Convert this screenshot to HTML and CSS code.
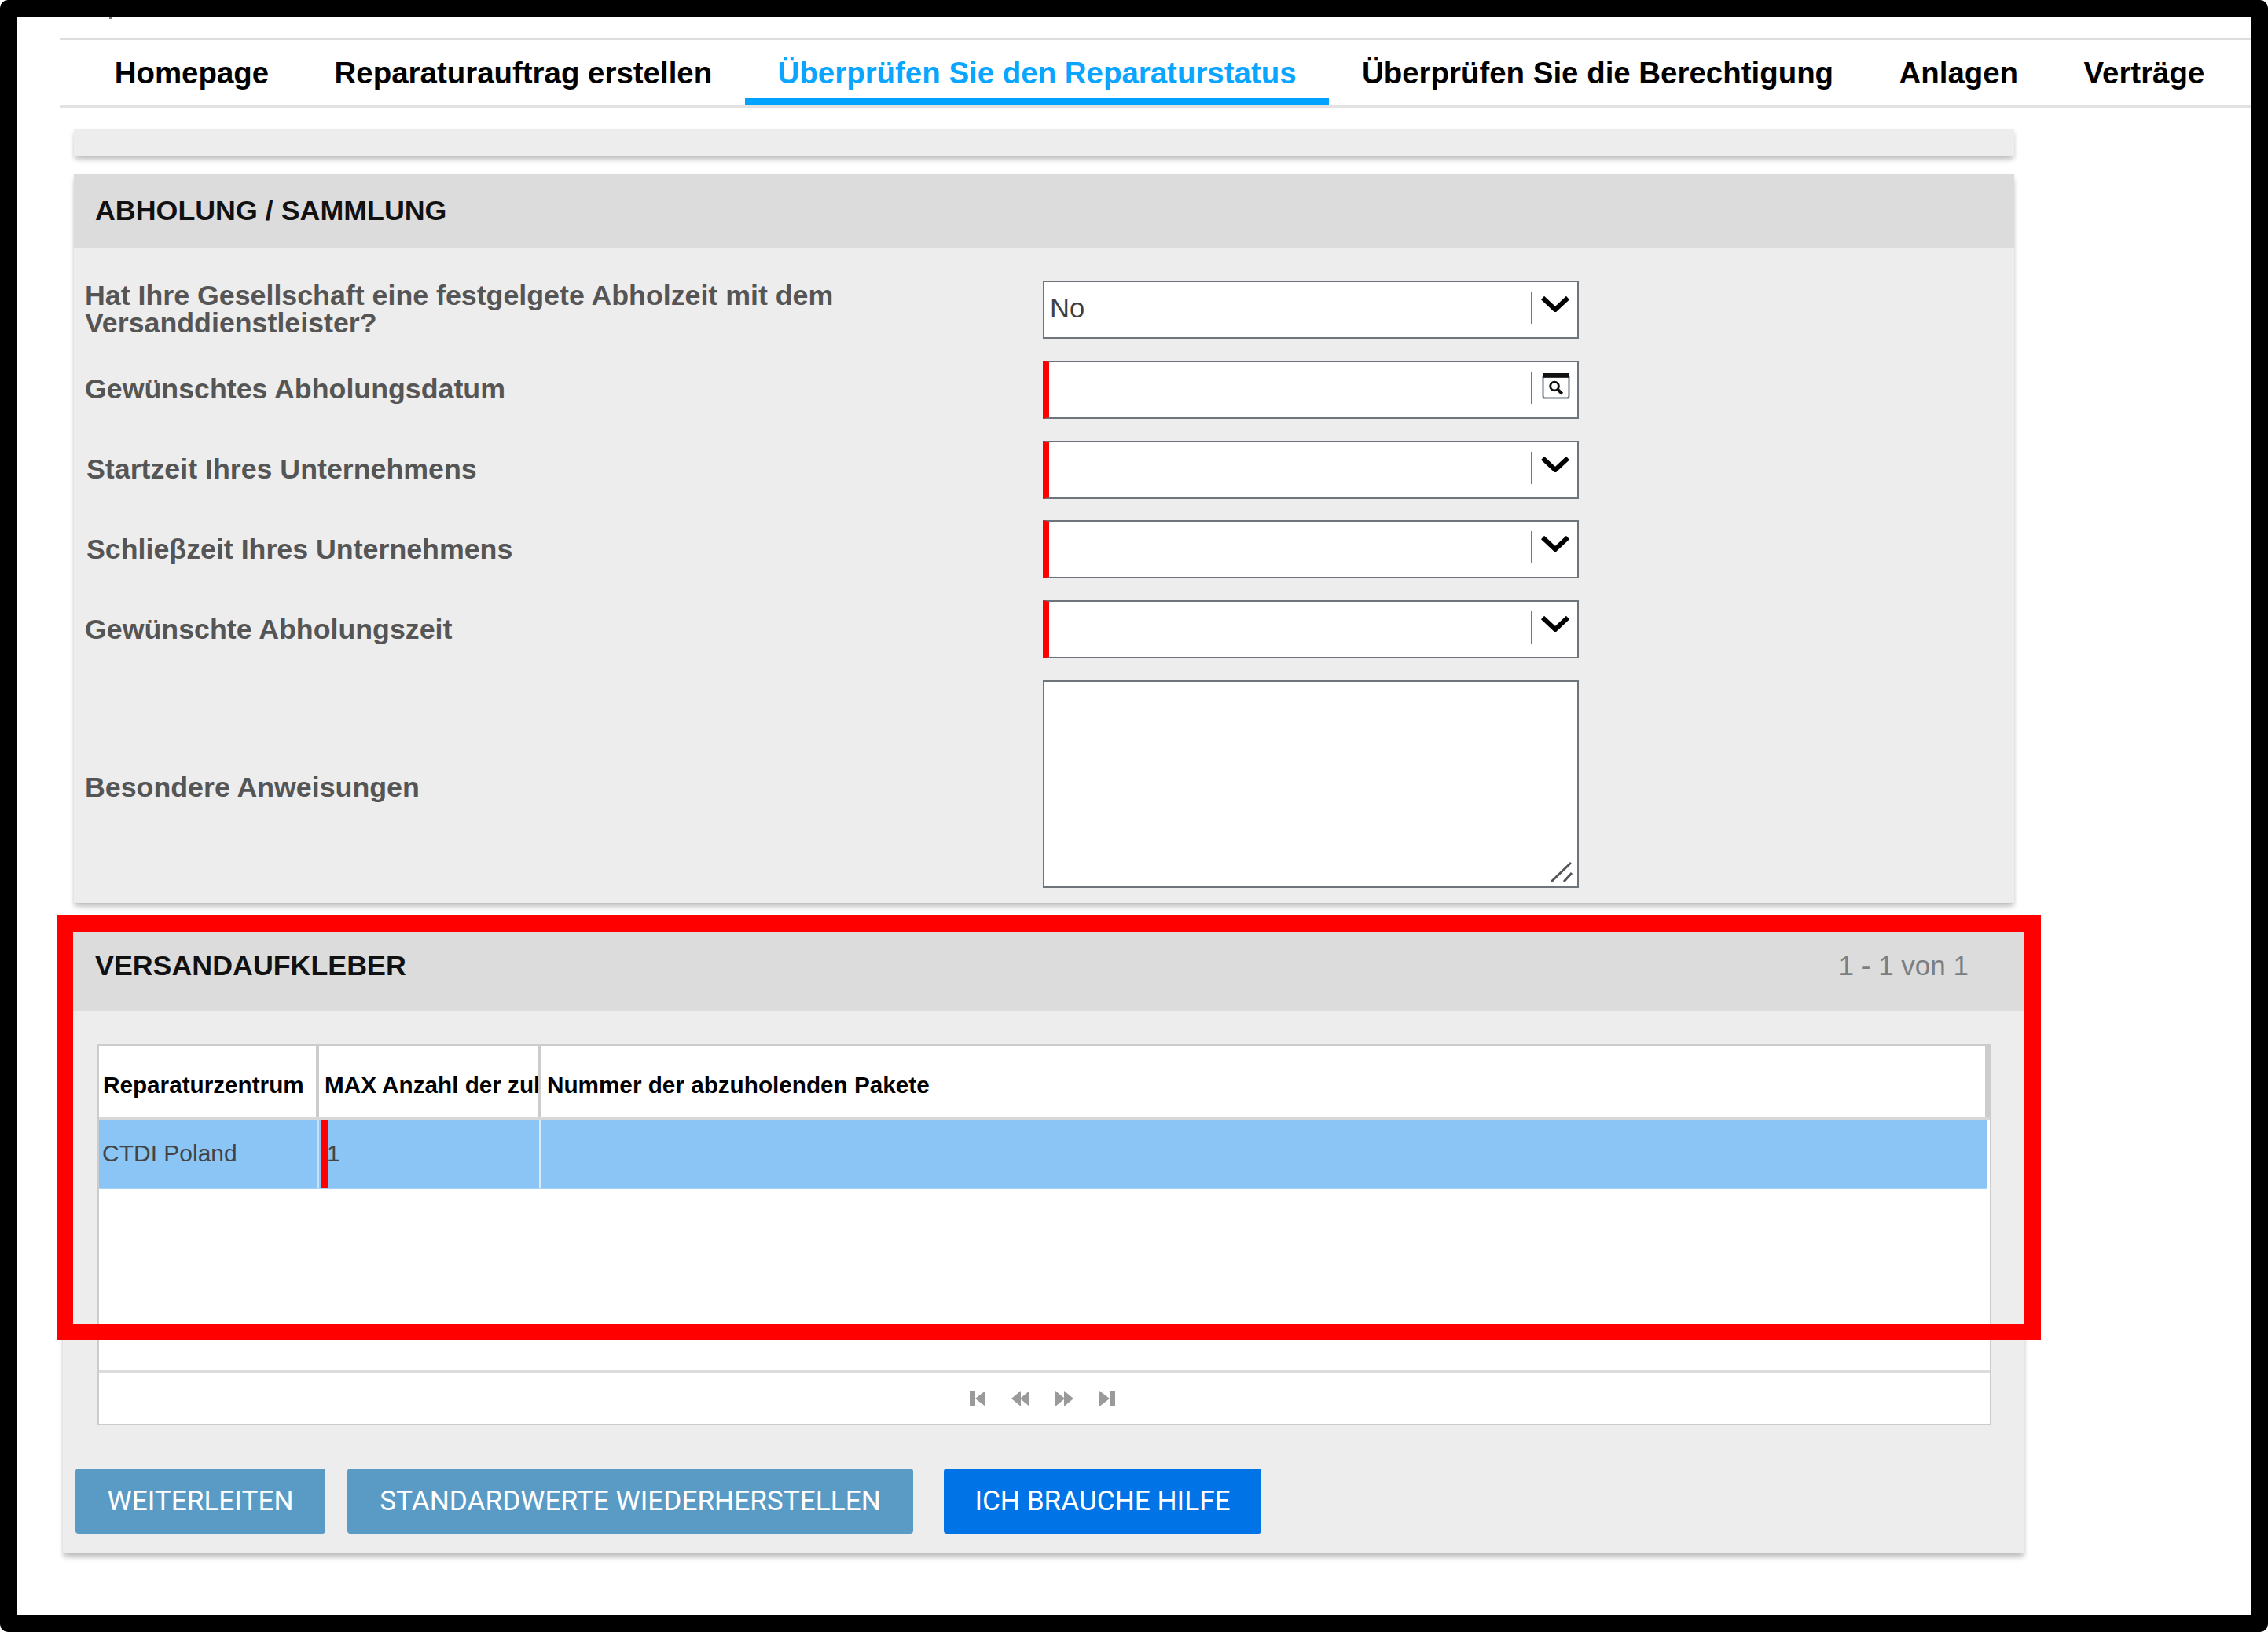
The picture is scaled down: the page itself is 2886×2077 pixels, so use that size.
FILE: index.html
```html
<!DOCTYPE html>
<html lang="de">
<head>
<meta charset="utf-8">
<title>Reparaturstatus</title>
<link rel="stylesheet" href="styles.css">
</head>
<body>
<div class="frame">
  <div class="top-strip"><span class="speck"></span></div>
  <nav class="tabs">
    <a class="tab">Homepage</a>
    <a class="tab">Reparaturauftrag erstellen</a>
    <a class="tab tab-active">Überprüfen Sie den Reparaturstatus</a>
    <a class="tab">Überprüfen Sie die Berechtigung</a>
    <a class="tab">Anlagen</a>
    <a class="tab">Verträge</a>
  </nav>

  <div class="panel stub"></div>

  <section class="panel pickup">
    <header class="panel-head pickup-head"><h2 class="panel-title">ABHOLUNG / SAMMLUNG</h2></header>
    <div class="form">
      <label class="label">Hat Ihre Gesellschaft eine festgelgete Abholzeit mit dem Versanddienstleister?</label>
      <div class="field"><span class="value">No</span><span class="divider"></span>
        <svg class="chev" viewBox="0 0 38 20"><path d="M3 2 L19 17 L35 2" /></svg></div>

      <label class="label">Gewünschtes Abholungsdatum</label>
      <div class="field req"><span class="value"></span><span class="divider"></span>
        <svg class="cal" viewBox="0 0 36 34">
          <rect class="cal-box" x="1" y="1.5" width="34" height="31" rx="3"/>
          <rect class="cal-bar" x="1" y="0" width="34" height="6"/>
          <circle class="cal-glass" cx="16" cy="17" r="5.5"/>
          <path class="cal-handle" d="M20 21 L26 27"/>
        </svg></div>

      <label class="label label-in">Startzeit Ihres Unternehmens</label>
      <div class="field req"><span class="value"></span><span class="divider"></span>
        <svg class="chev" viewBox="0 0 38 20"><path d="M3 2 L19 17 L35 2" /></svg></div>

      <label class="label label-in">Schlieβzeit Ihres Unternehmens</label>
      <div class="field req"><span class="value"></span><span class="divider"></span>
        <svg class="chev" viewBox="0 0 38 20"><path d="M3 2 L19 17 L35 2" /></svg></div>

      <label class="label">Gewünschte Abholungszeit</label>
      <div class="field req"><span class="value"></span><span class="divider"></span>
        <svg class="chev" viewBox="0 0 38 20"><path d="M3 2 L19 17 L35 2" /></svg></div>

      <label class="label label-area">Besondere Anweisungen</label>
      <div class="area">
        <svg class="grip" viewBox="0 0 30 28"><path d="M2 26 L27 2 M18 26 L28 15"/></svg>
      </div>
    </div>
  </section>

  <section class="panel labels">
    <header class="panel-head labels-head">
      <h2 class="panel-title">VERSANDAUFKLEBER</h2>
      <span class="count">1 - 1 von 1</span>
    </header>
    <div class="grid">
      <div class="grid-head">
        <div class="th th-1">Reparaturzentrum</div>
        <div class="th th-2">MAX Anzahl der zul</div>
        <div class="th th-3">Nummer der abzuholenden Pakete</div>
      </div>
      <div class="grid-row">
        <div class="td td-1">CTDI Poland</div>
        <div class="td td-2"><span class="req-bar"></span><span class="td-num">1</span></div>
        <div class="td td-3"></div>
      </div>
      <div class="grid-empty"></div>
      <div class="pager">
        <svg class="pg pg-end" viewBox="0 0 20 20"><path d="M0 0h7v20H0z M20 0v20L7 10z"/></svg>
        <svg class="pg" viewBox="0 0 23 20"><path d="M12 0v20L0 10z M23 0v20L11 10z"/></svg>
        <svg class="pg" viewBox="0 0 23 20"><path d="M0 0v20l12-10z M11 0v20l12-10z"/></svg>
        <svg class="pg pg-end" viewBox="0 0 20 20"><path d="M0 0v20l13-10z M13 0h7v20h-7z"/></svg>
      </div>
    </div>
    <div class="actions">
      <button class="btn">WEITERLEITEN</button>
      <button class="btn btn-2">STANDARDWERTE WIEDERHERSTELLEN</button>
      <button class="btn btn-help">ICH BRAUCHE HILFE</button>
    </div>
  </section>

  <div class="highlight"></div>
</div>
</body>
</html>
```

FILE: styles.css
```css
* { box-sizing: border-box; }
html, body { margin: 0; padding: 0; background: #fff; }
body { font-family: "Liberation Sans", Arial, sans-serif; }

.frame {
  position: relative;
  width: 2886px;
  height: 2077px;
  border: 21px solid #000;
  border-radius: 10px;
  background: #fff;
  overflow: hidden;
}

.top-strip { height: 27px; padding-left: 118px; }
.speck { display: block; width: 3px; height: 3px; background: #777; }

.tabs {
  display: flex;
  margin-left: 55px;
  padding-left: 28px;
  height: 89px;
  border-top: 3px solid #ddd;
  border-bottom: 3px solid #e2e2e2;
}
.tab {
  display: flex;
  align-items: center;
  height: 83px;
  padding: 0 41.7px;
  font-size: 38.45px;
  font-weight: 700;
  color: #000;
  white-space: nowrap;
}
.tab-active { color: #0aa5ff; box-shadow: inset 0 -9px 0 #00a2ff; }

.panel {
  background: #ededed;
  box-shadow: 0 4px 6px rgba(0, 0, 0, .2), 0 9px 10px -4px rgba(0, 0, 0, .1);
}
.stub { margin: 27px 0 24px 73px; width: 2469px; height: 34px; }
.pickup { margin: 0 0 24px 73px; width: 2469px; }

.panel-head {
  display: flex;
  align-items: center;
  justify-content: space-between;
  background: #dcdcdc;
}
.pickup-head { height: 93px; padding-left: 27px; }
.labels-head { height: 114px; padding: 0 71px 0 41px; }
.panel-title { margin: 0; font-size: 35.8px; font-weight: 700; color: #111; }
.count { font-size: 35px; color: #7b7f84; padding-bottom: 2px; }

.form {
  display: grid;
  grid-template-columns: 1219px 682px;
  row-gap: 27.75px;
  align-items: center;
  padding: 42px 0 19px 14px;
}
.label {
  max-width: 1000px;
  font-size: 35.75px;
  line-height: 35px;
  font-weight: 700;
  color: #555;
}
.label-in { padding-left: 2px; }
.label-area { padding-top: 9px; }

.field {
  display: flex;
  align-items: center;
  position: relative;
  height: 74px;
  padding: 0 9px 3px 7px;
  border: 2px solid #6f747a;
  background: #fff;
}
.req { border-left: 8px solid #f00; }
.value { flex: 1; font-size: 34.5px; color: #3c4043; }
.divider { width: 2px; height: 41px; margin: -2px 10px 0 0; background: #777; }
.chev { width: 38px; height: 20px; margin-top: -11px; }
.chev path { fill: none; stroke: #000; stroke-width: 6; }
.cal { width: 36px; height: 33px; margin: -6px 0 0 2px; }
.cal-box { fill: #fff; stroke: #5d6a78; stroke-width: 2; }
.cal-bar { fill: #111; }
.cal-glass { fill: none; stroke: #111; stroke-width: 3; }
.cal-handle { fill: none; stroke: #111; stroke-width: 4; }

.area {
  display: flex;
  align-items: flex-end;
  justify-content: flex-end;
  height: 264px;
  padding: 0 5px 4px 0;
  border: 2px solid #6f747a;
  background: #fff;
}
.grip { width: 30px; height: 28px; }
.grip path { fill: none; stroke: #555; stroke-width: 3; }

.labels { margin-left: 59px; width: 2496px; height: 804px; }

.grid {
  margin: 42px 0 0 44px;
  width: 2410px;
  height: 485px;
  display: flex;
  flex-direction: column;
  background: #fff;
  border: 2px solid #ccc;
}
.grid-head {
  display: grid;
  grid-template-columns: 280px 282px 1fr;
  height: 94px;
  border-bottom: 4px solid #d8d8d8;
}
.th {
  display: flex;
  align-items: center;
  padding: 10px 0 0 5px;
  font-size: 29.7px;
  font-weight: 700;
  color: #000;
  white-space: nowrap;
  overflow: hidden;
  border-right: 4px solid #ccc;
}
.th-2 { padding-left: 7px; }
.th-3 { padding-left: 8px; border-right-width: 6px; }

.grid-row {
  display: grid;
  grid-template-columns: 280px 282px 1fr;
  height: 88px;
  margin-right: 3px;
  background: #8ac5f5;
  border-bottom: 1px solid #a9d3f5;
}
.td {
  display: flex;
  align-items: center;
  font-size: 30px;
  color: #444;
  white-space: nowrap;
}
.td-1 { padding-left: 4px; border-right: 2px solid #c5e0f7; }
.td-2 { border-right: 2px solid #d9ebfa; }
.req-bar { align-self: stretch; width: 8px; margin: 0 -1px 0 3px; background: #f00; }
.td-num { position: relative; }

.grid-empty { flex: 1; border-bottom: 4px solid #dcdcdc; }
.pager {
  display: flex;
  align-items: center;
  justify-content: center;
  gap: 33px;
  height: 64px;
  padding-right: 5px;
}
.pg { width: 23px; height: 20px; fill: #9a9a9a; }
.pg-end { width: 20px; }

.actions { display: flex; margin: 55px 0 0 16px; }
.btn {
  height: 83px;
  padding: 0;
  border: 0;
  border-radius: 4px;
  background: #5a9bc6;
  color: #fff;
  font-family: Roboto, "Liberation Sans", sans-serif;
  font-size: 35.2px;
  width: 318px;
  text-align: center;
}
.btn-2 { width: 720px; margin-left: 28px; }
.btn-help { width: 404px; margin-left: 39px; background: #0073e6; }

.highlight {
  position: absolute;
  left: 51px;
  top: 1144px;
  width: 2525px;
  height: 541px;
  border: 21px solid #f00;
}
```
